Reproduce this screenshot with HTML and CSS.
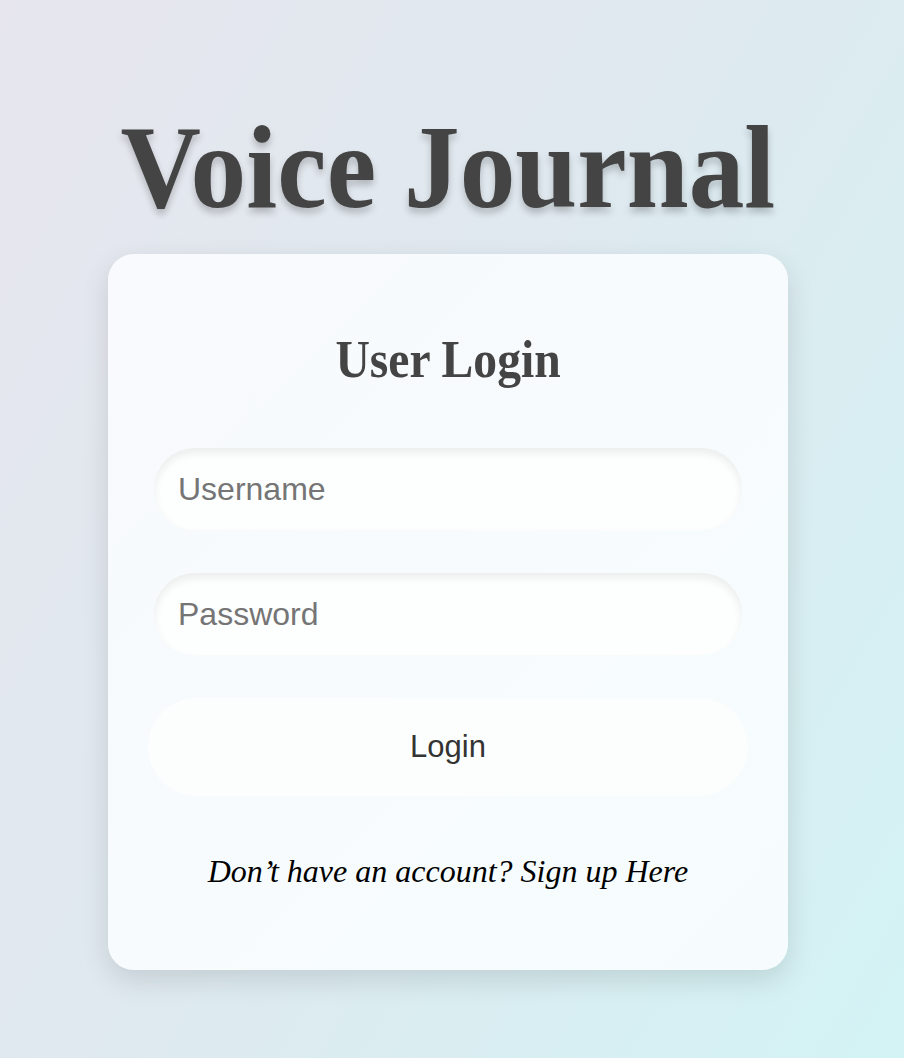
FILE: index.html
```html
<!DOCTYPE html>
<html lang="en">
<head>
<meta charset="utf-8">
<title>Voice Journal</title>
<link rel="stylesheet" href="styles.css">
</head>
<body>
<main class="page">
  <h1 class="title"><span class="title-text">Voice Journal</span></h1>
  <section class="card">
    <h2 class="card-title"><span class="card-title-text">User Login</span></h2>
    <form class="form">
      <input class="field" type="text" placeholder="Username">
      <input class="field" type="password" placeholder="Password">
      <button class="btn" type="button">Login</button>
    </form>
    <p class="signup">Don’t have an account? Sign up Here</p>
  </section>
</main>
</body>
</html>
```
FILE: styles.css
```css
html, body {
  margin: 0;
  padding: 0;
  min-height: 100%;
}
body {
  background: linear-gradient(120deg, #e7e6ee 0%, #dfe9ef 45%, #d3f3f5 100%);
  min-height: 1058px;
}
.page {
  display: flex;
  flex-direction: column;
  align-items: center;
  padding: 108px 8px 0 0;
}
.title {
  margin: 0 0 27px;
  font-family: "Liberation Serif", "Times New Roman", serif;
  font-weight: bold;
  font-size: 119px;
  line-height: 1;
  color: #444444;
  text-shadow: 0 5px 8px rgba(0, 0, 0, 0.22);
  white-space: nowrap;
}
.title-text {
  display: inline-block;
  transform: scaleX(0.936);
}
.card {
  box-sizing: border-box;
  width: 680px;
  height: 716px;
  padding: 80px 46px 0;
  border-radius: 26px;
  background: linear-gradient(135deg, #f8fafd 0%, #f6fcfd 100%);
  box-shadow: 0 10px 28px rgba(0, 0, 0, 0.12);
  display: flex;
  flex-direction: column;
  align-items: stretch;
}
.card-title {
  margin: 0;
  text-align: center;
  font-family: "Liberation Serif", "Times New Roman", serif;
  font-weight: bold;
  font-size: 52px;
  line-height: 1;
  color: #444444;
  white-space: nowrap;
}
.card-title-text {
  display: inline-block;
  transform: scaleX(0.915);
}
.form {
  display: flex;
  flex-direction: column;
  gap: 43px;
  margin-top: 62px;
}
.field {
  box-sizing: border-box;
  height: 82px;
  width: 100%;
  border: none;
  outline: none;
  border-radius: 41px;
  padding: 0 24px;
  background: #fdfefe;
  box-shadow: inset 0 5px 9px rgba(0, 0, 0, 0.07), inset 0 -2px 5px rgba(255, 255, 255, 0.8);
  font-family: "Liberation Sans", Arial, sans-serif;
  font-size: 32px;
  color: #333;
}
.field::placeholder {
  color: #757575;
}
.btn {
  box-sizing: border-box;
  height: 98px;
  margin: 0 -6px;
  border: none;
  border-radius: 49px;
  background: rgba(255, 255, 255, 0.65);
  font-family: "Liberation Sans", Arial, sans-serif;
  font-size: 31px;
  color: #333333;
  cursor: pointer;
}
.signup {
  margin: 59px 0 0;
  text-align: center;
  font-family: "Liberation Serif", "Times New Roman", serif;
  font-style: italic;
  font-size: 32px;
  line-height: 1;
  color: #000;
}
```
